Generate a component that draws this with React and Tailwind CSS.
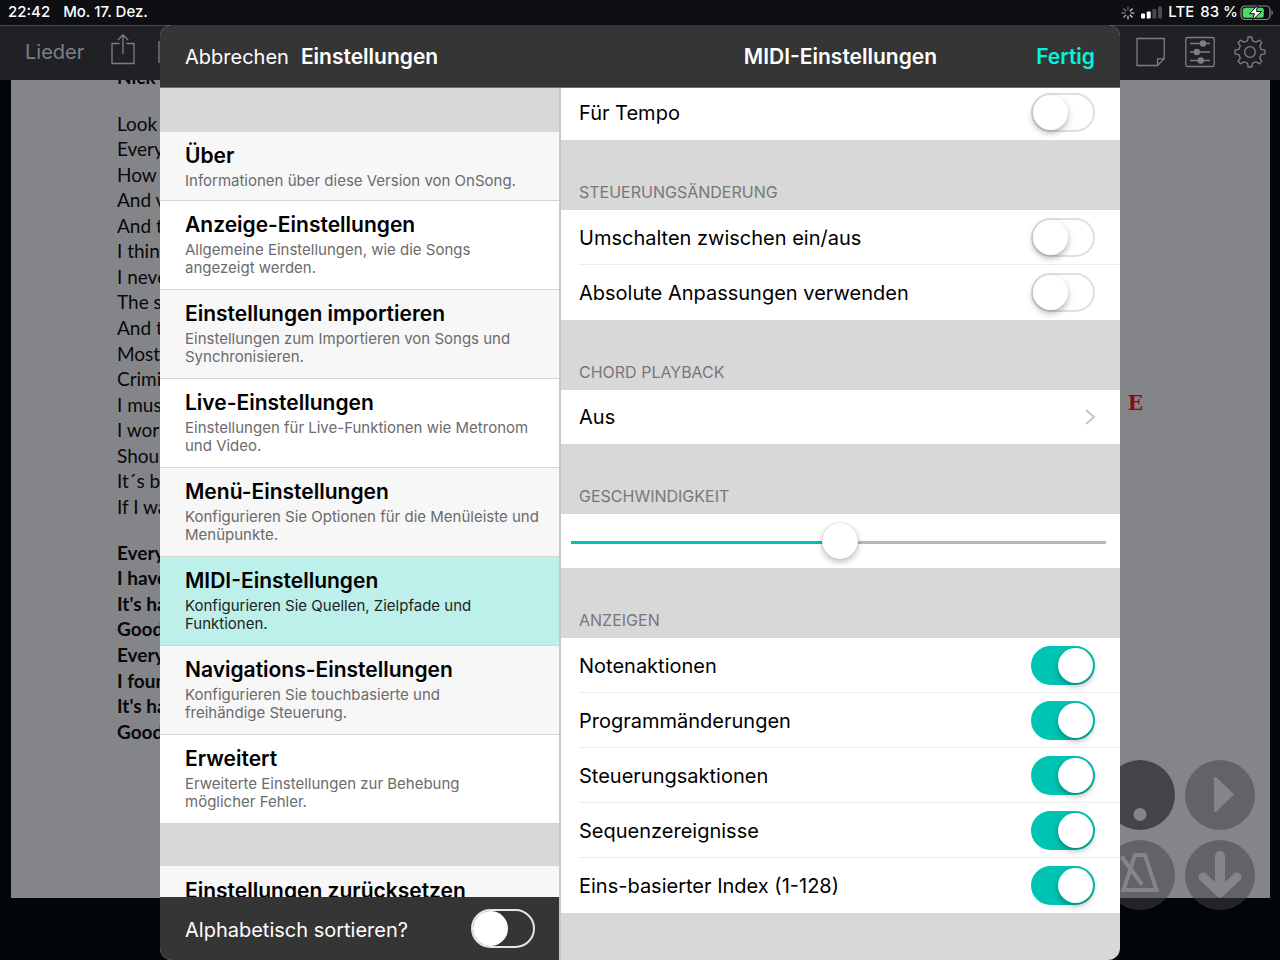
import { useState } from 'react';

const menuItems = [
  { title: 'Über', text: 'Informationen über diese Version von OnSong.', short: true },
  { title: 'Anzeige-Einstellungen', text: 'Allgemeine Einstellungen, wie die Songs\nangezeigt werden.' },
  { title: 'Einstellungen importieren', text: 'Einstellungen zum Importieren von Songs und\nSynchronisieren.' },
  { title: 'Live-Einstellungen', text: 'Einstellungen für Live-Funktionen wie Metronom\nund Video.' },
  { title: 'Menü-Einstellungen', text: 'Konfigurieren Sie Optionen für die Menüleiste und\nMenüpunkte.' },
  { title: 'MIDI-Einstellungen', text: 'Konfigurieren Sie Quellen, Zielpfade und\nFunktionen.' },
  { title: 'Navigations-Einstellungen', text: 'Konfigurieren Sie touchbasierte und\nfreihändige Steuerung.' },
  { title: 'Erweitert', text: 'Erweiterte Einstellungen zur Behebung\nmöglicher Fehler.' },
];

const verse = [
  'Look', 'Every', 'How', 'And v', 'And t', 'I thin', 'I neve', 'The s',
  'And t', 'Most', 'Crimi', 'I mus', 'I wor', 'Shou', 'It´s b', 'If I wa',
];

const chorus = ['Every', 'I have', "It's ha", 'Good', 'Every', 'I foun', "It's ha", 'Good'];

const displayOptions = [
  'Notenaktionen',
  'Programmänderungen',
  'Steuerungsaktionen',
  'Sequenzereignisse',
  'Eins-basierter Index (1-128)',
];

const StatusBar = () => (
  <div className="flex h-[25px] shrink-0 items-center justify-between bg-[#0d0f13] px-2 text-[15px] font-medium text-white">
    <div className="flex gap-[13px]">
      <span>22:42</span>
      <span>Mo. 17. Dez.</span>
    </div>
    <div className="flex items-center">
      <svg width="14" height="14" viewBox="0 0 14 14" stroke="#fff" strokeWidth="1.2" strokeLinecap="round">
        <path d="M7 1v3" opacity=".4" />
        <path d="M11.2 2.8L9.2 4.8" opacity=".95" />
        <path d="M13 7h-3" opacity=".9" />
        <path d="M11.2 11.2l-2-2" opacity=".9" />
        <path d="M7 13v-3" opacity=".8" />
        <path d="M2.8 11.2l2-2" opacity=".7" />
        <path d="M1 7h3" opacity=".6" />
        <path d="M2.8 2.8l2 2" opacity=".5" />
      </svg>
      <svg className="ml-1.5" width="21" height="13" viewBox="0 0 21 13" fill="#fff">
        <rect x="0" y="7.5" width="4" height="5" rx="1" />
        <rect x="5.7" y="5.5" width="4" height="7" rx="1" />
        <rect x="11.4" y="3" width="4" height="9.5" rx="1" opacity=".25" />
        <rect x="17" y="0.5" width="4" height="12" rx="1" opacity=".25" />
      </svg>
      <span className="ml-1.5">LTE</span>
      <span className="ml-1.5">83 %</span>
      <svg className="-mr-0.5 ml-0.5" width="34" height="16" viewBox="0 0 34 16">
        <rect x="1" y="1" width="29" height="13.5" rx="4" fill="none" stroke="#8a8b8d" strokeWidth="1.2" />
        <rect x="2.8" y="2.8" width="21" height="10" rx="2.5" fill="#4cd964" />
        <path d="M31.5 5.3c1.7.7 1.7 4.300 0 5z" fill="#8a8b8d" />
        <path d="M17.500 0.500L9.500 8.700h4.900L12.500 15l9-8.500h-5z" fill="#fff" stroke="#0d0f13" strokeWidth="1" />
      </svg>
    </div>
  </div>
);

const Toolbar = () => (
  <div className="flex h-[55px] shrink-0 items-center justify-between border-t border-[#05695f] bg-[#202125] pr-3.5 pb-0.5 pl-[25px] text-[#7e7f83]">
    <div className="flex items-center">
      <button type="button" className="text-[20px]">Lieder</button>
      <button type="button" aria-label="Teilen" className="-mt-1.5 ml-[26px]">
        <svg width="26" height="34" viewBox="0 0 26 34" fill="none" stroke="currentColor" strokeWidth="1.3">
          <path d="M9.500 11.500H2v20h22v-20h-7.500M13 22V3M7.800 8L13 3l5.200 5" />
        </svg>
      </button>
      <button type="button" aria-label="Seite" className="ml-5">
        <svg width="26" height="26" viewBox="0 0 26 26" fill="none" stroke="currentColor" strokeWidth="1.3">
          <rect x="3" y="3" width="20" height="20" />
        </svg>
      </button>
    </div>
    <div className="flex items-center gap-[19px]">
      <button type="button" aria-label="Notiz">
        <svg width="30" height="30" viewBox="0 0 30 30" fill="none" stroke="currentColor" strokeWidth="1.3">
          <path d="M1 1.500h27.200v20.300l-6.700 6.700H1zM21.500 28.500v-6.700h6.700" />
        </svg>
      </button>
      <button type="button" aria-label="Regler">
        <svg width="30" height="32" viewBox="0 0 30 32" fill="none" stroke="currentColor" strokeWidth="1.3">
          <rect x="0.8" y="1.500" width="28.400" height="29" rx="1.500" />
          <path d="M5 7.500h20M5 16h20M5 24.500h20" />
          <g fill="currentColor" stroke="none">
            <circle cx="18" cy="7.500" r="3.200" />
            <circle cx="11.800" cy="16" r="3.200" />
            <circle cx="15.800" cy="24.500" r="3.200" />
          </g>
        </svg>
      </button>
      <button type="button" aria-label="Einstellungen öffnen">
        <svg width="32" height="32" viewBox="-16 -16 32 32" fill="none" stroke="currentColor" strokeWidth="1.3" strokeLinejoin="round">
          <circle r="5.300" />
          <path d="M-1.800 -15H1.800L2.600 -11.200L6.080 -9.760L9.330 -11.880L11.880 -9.330L9.760 -6.080L11.200 -2.600L15 -1.800V1.800L11.200 2.600L9.760 6.080L11.880 9.330L9.330 11.880L6.080 9.760L2.600 11.200L1.800 15H-1.800L-2.600 11.200L-6.080 9.760L-9.330 11.880L-11.880 9.330L-9.760 6.080L-11.200 2.600L-15 1.800V-1.800L-11.200 -2.600L-9.760 -6.080L-11.880 -9.330L-9.330 -11.880L-6.080 -9.760L-2.600 -11.200Z" />
        </svg>
      </button>
    </div>
  </div>
);

const SongSheet = () => (
  <div className="mr-2.5 mb-[62px] ml-[11px] flex min-h-0 flex-1 justify-between overflow-hidden bg-[#848589] pr-[127px] pl-[106px] font-['Lato',sans-serif] text-[19px] text-[#08090c]">
    <div>
      <p className="-mt-4 h-[25px] leading-[25px] font-bold">Nick</p>
      <div className="mt-[22px] grid h-[409px] auto-rows-fr items-center">
        {verse.map((line, i) => (
          <p key={i}>{line}</p>
        ))}
      </div>
      <div className="mt-5 grid h-[205px] auto-rows-fr items-center font-bold">
        {chorus.map((line, i) => (
          <p key={i}>{line}</p>
        ))}
      </div>
    </div>
    <span className="mt-[308px] font-['DejaVu_Serif',serif] text-[20px] font-bold text-[#8b0a12]">E</span>
  </div>
);

const FloatingControls = () => (
  <div className="absolute right-[25px] bottom-[50px] grid grid-cols-2 gap-2.5 text-[#848589]">
    <button type="button" aria-label="Punkt" className="flex size-[70px] items-center justify-center rounded-full bg-[#434448]">
      <svg width="70" height="70" viewBox="0 0 70 70" fill="currentColor">
        <circle cx="35" cy="54.500" r="6.500" />
      </svg>
    </button>
    <button type="button" aria-label="Abspielen" className="flex size-[70px] items-center justify-center rounded-full bg-[#414246]/50">
      <svg width="70" height="70" viewBox="0 0 70 70" fill="currentColor" stroke="currentColor" strokeWidth="3" strokeLinejoin="round">
        <path d="M30.500 18.500v32L47 34.500z" />
      </svg>
    </button>
    <button type="button" aria-label="Metronom" className="flex size-[70px] items-center justify-center rounded-full bg-[#414246]/50">
      <svg width="70" height="70" viewBox="0 0 70 70" fill="none" stroke="currentColor" strokeWidth="4">
        <path d="M30 15h10l11.500 35h-33z" />
        <path d="M17.500 18L36 43" strokeLinecap="round" strokeWidth="4.500" />
      </svg>
    </button>
    <button type="button" aria-label="Nach unten" className="flex size-[70px] items-center justify-center rounded-full bg-[#414246]/50">
      <svg width="70" height="70" viewBox="0 0 70 70" fill="none" stroke="currentColor" strokeWidth="10" strokeLinecap="round" strokeLinejoin="round">
        <path d="M35 16v36" />
        <path d="M18 37l17 16L52 37" strokeWidth="9" />
      </svg>
    </button>
  </div>
);

const Switch = ({ id, defaultChecked, dark }) => (
  <input
    id={id}
    type="checkbox"
    role="switch"
    defaultChecked={defaultChecked}
    className={`h-[39px] w-16 shrink-0 appearance-none rounded-full border-2 before:block before:size-[35px] before:rounded-full before:bg-white checked:border-[#00c4b3] checked:bg-[#00c4b3] checked:before:translate-x-[25px] ${
      dark
        ? 'border-[#e5e5e5]'
        : 'border-[#e0e0e0] before:shadow-[0_3px_6px_rgba(0,0,0,0.3)]'
    }`}
  />
);

const SwitchRow = ({ id, label, defaultChecked }) => (
  <div className="ml-[18px] flex h-[55px] items-center justify-between border-b border-[#ececec] pr-[25px] last:border-transparent">
    <label htmlFor={id} className="pt-0.5">{label}</label>
    <Switch id={id} defaultChecked={defaultChecked} />
  </div>
);

const SectionTitle = ({ children }) => (
  <h3 className="flex h-[70px] items-end px-[18px] pb-1.5 text-[16px] leading-6 text-[#77777a]">{children}</h3>
);

const MenuRow = ({ item, active, striped, onClick }) => (
  <button
    type="button"
    onClick={onClick}
    className={`flex w-full flex-col gap-[3px] border-b border-[#d5d5d5] pt-[11px] pl-[25px] text-left ${
      item.short ? 'h-[69px]' : 'h-[89px]'
    } ${active ? 'bg-[#bdf0ea]' : striped ? 'bg-[#f7f7f7]' : 'bg-white'}`}
  >
    <span className="text-[21px] leading-[26px] font-semibold text-black">{item.title}</span>
    <span
      className={`text-[15px] leading-[18px] whitespace-pre-line ${active ? 'text-[#1c2423]' : 'text-[#6b6b6b]'}`}
    >
      {item.text}
    </span>
  </button>
);

const App = () => {
  const [selected, setSelected] = useState(5);
  const [speed, setSpeed] = useState(50.4);

  return (
    <div className="relative flex h-screen flex-col overflow-hidden bg-[#02060a] font-['Inter',sans-serif]">
      <StatusBar />
      <Toolbar />
      <SongSheet />
      <FloatingControls />

      <div className="absolute inset-x-0 top-[25px] bottom-0 mx-auto flex w-3/4 flex-col overflow-hidden rounded-xl bg-[#d8d8d8] text-[20px] text-black">
        <header className="flex h-[63px] shrink-0 items-center border-b border-[#6f6f6f] bg-[#353535] pt-0.5 text-white">
          <div className="flex w-[401px] shrink-0 items-baseline gap-3 pl-[25px]">
            <button type="button">Abbrechen</button>
            <h1 className="text-[21px] font-semibold">Einstellungen</h1>
          </div>
          <div className="grid flex-1 grid-cols-[1fr_auto_1fr] items-center px-[25px] text-[21px] font-semibold">
            <h2 className="col-start-2">MIDI-Einstellungen</h2>
            <button type="button" className="justify-self-end text-[#00f5dc]">Fertig</button>
          </div>
        </header>

        <div className="flex min-h-0 flex-1">
          <aside className="flex w-[401px] shrink-0 flex-col border-r-2 border-[#c8c8c8]">
            <nav className="min-h-0 flex-1 overflow-hidden pt-11">
              {menuItems.map((item, i) => (
                <MenuRow
                  key={item.title}
                  item={item}
                  active={selected === i}
                  striped={i % 2 === 0}
                  onClick={() => setSelected(i)}
                />
              ))}
              <button
                type="button"
                className="mt-[42px] block w-full bg-[#f7f7f7] px-[25px] pt-3 pb-4 text-left text-[21px] leading-[26px] font-semibold"
              >
                Einstellungen zurücksetzen
              </button>
            </nav>
            <div className="flex h-[63px] shrink-0 items-center justify-between bg-[#353535] pr-6 pl-[25px] text-white">
              <label htmlFor="sort" className="pt-0.5">Alphabetisch sortieren?</label>
              <Switch id="sort" dark />
            </div>
          </aside>

          <main className="min-w-0 flex-1 overflow-hidden">
            <div className="-mt-[3px] bg-white">
              <SwitchRow id="tempo" label="Für Tempo" />
            </div>

            <SectionTitle>STEUERUNGSÄNDERUNG</SectionTitle>
            <div className="bg-white">
              <SwitchRow id="toggle" label="Umschalten zwischen ein/aus" />
              <SwitchRow id="absolute" label="Absolute Anpassungen verwenden" />
            </div>

            <SectionTitle>CHORD PLAYBACK</SectionTitle>
            <button type="button" className="flex h-[54px] w-full items-center justify-between bg-white pr-6 pl-[18px]">
              Aus
              <svg width="12" height="18" viewBox="0 0 12 18" fill="none" stroke="#c5c5ca" strokeWidth="2">
                <path d="M2 2l8 7-8 7" />
              </svg>
            </button>

            <SectionTitle>GESCHWINDIGKEIT</SectionTitle>
            <div className="flex h-[54px] items-center bg-white pr-3.5 pl-2.5">
              <input
                type="range"
                aria-label="Geschwindigkeit"
                min="0"
                max="100"
                step="0.1"
                value={speed}
                onChange={(e) => setSpeed(Number(e.target.value))}
                style={{ '--fill': `${speed}%` }}
                className="h-9 w-full appearance-none bg-[linear-gradient(to_right,#00c4b3_var(--fill),#b7b7b7_var(--fill))] bg-[length:100%_3px] bg-[position:center_18px] bg-no-repeat [&::-webkit-slider-thumb]:size-9 [&::-webkit-slider-thumb]:appearance-none [&::-webkit-slider-thumb]:rounded-full [&::-webkit-slider-thumb]:bg-white [&::-webkit-slider-thumb]:shadow-[0_3px_6px_rgba(0,0,0,0.25),0_0_1px_rgba(0,0,0,0.4)]"
              />
            </div>

            <SectionTitle>ANZEIGEN</SectionTitle>
            <div className="bg-white">
              {displayOptions.map((label, i) => (
                <SwitchRow key={label} id={`display-${i}`} label={label} defaultChecked />
              ))}
            </div>
          </main>
        </div>
      </div>
    </div>
  );
};

export default App;
